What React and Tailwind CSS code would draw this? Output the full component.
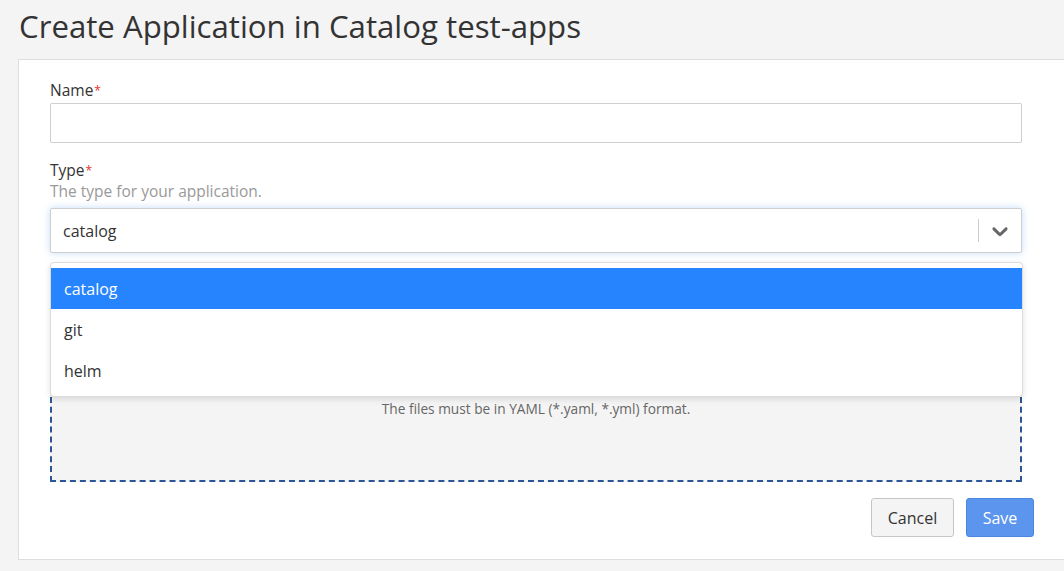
export default function App() {
  const font = { fontFamily: '"Open Sans", "Noto Sans", sans-serif' };
  return (
    <div className="w-[1064px] h-[571px] overflow-hidden bg-[#f4f4f4]" style={font}>
      <div className="pt-[5px] pl-[19px] h-[59px]">
        <h1 className="text-[31.2px] leading-[42px] text-[#333] font-normal">Create Application in Catalog test-apps</h1>
      </div>
      <div className="ml-[18px] w-[1100px] bg-white border border-[#dedede] pl-[31px] pt-[20px] pb-[22px]">
        <div className="w-[972px]">
          <label className="flex items-start h-[20px] text-[15.5px] leading-[20px] text-[#333]">
            Name<span className="text-[#e5322d] text-[12px] leading-[18px] mt-[2px] ml-[1px]">*</span>
          </label>
          <div className="mt-[3px] h-[40px] border border-[#cfcfcf] rounded-[2px] bg-white" />
          <label className="flex items-start h-[20px] mt-[17px] text-[15.5px] leading-[20px] text-[#333]">
            Type<span className="text-[#e5322d] text-[12px] leading-[18px] mt-[2px] ml-[1px]">*</span>
          </label>
          <div className="mt-[1px] h-[20px] text-[15.5px] leading-[20px] text-[#999]">The type for your application.</div>
          <div className="relative mt-[7px]">
            <div className="h-[45px] flex items-center border border-[#cfcfcf] rounded-[2px] bg-white shadow-[0_0_7px_rgba(120,180,240,0.45)]">
              <div className="flex-1 pl-[12px] text-[16px] text-[#333]">catalog</div>
              <div className="w-px h-[23px] bg-[#cccccc]" />
              <div className="px-[8px] flex items-center">
                <svg width="26" height="26" viewBox="0 0 20 20" fill="#666">
                  <path d="M4.516 7.548c0.436-0.446 1.043-0.481 1.576 0l3.908 3.747 3.908-3.747c0.533-0.481 1.141-0.446 1.574 0 0.436 0.445 0.408 1.197 0 1.615-0.406 0.418-4.695 4.502-4.695 4.502-0.217 0.223-0.502 0.335-0.787 0.335s-0.57-0.112-0.789-0.335c0 0-4.287-4.084-4.695-4.502s-0.436-1.17 0-1.615z" />
                </svg>
              </div>
            </div>
            <div className="absolute left-0 top-[54px] w-[973px] z-10 bg-white border border-[#dcdcdc] rounded-[4px] shadow-[0_2px_6px_rgba(0,0,0,0.12)] pt-[5px] pb-[5px]">
              <div className="h-[41px] flex items-center px-[13px] bg-[#2684ff] text-white text-[16px]">catalog</div>
              <div className="h-[41px] flex items-center px-[13px] text-[#333] text-[16px]">git</div>
              <div className="h-[41px] flex items-center px-[13px] text-[#333] text-[16px]">helm</div>
            </div>
          </div>
          <div className="mt-[45px] h-[184px] border-2 border-dashed border-[#2b5597] bg-[#f4f4f4] pt-[101px] text-center text-[13.7px] leading-[16px] text-[#666]">
            The files must be in YAML (*.yaml, *.yml) format.
          </div>
        </div>
        <div className="w-[984px] mt-[16px] flex justify-end gap-[12px]">
          <button className="h-[39px] w-[83px] border border-[#c6c6c6] rounded-[3px] bg-[#f4f4f4] text-[16px] text-[#333]">Cancel</button>
          <button className="h-[39px] w-[68px] border border-[#4a86e0] rounded-[3px] bg-[#5b95ed] text-[16px] text-white">Save</button>
        </div>
      </div>
    </div>
  );
}
